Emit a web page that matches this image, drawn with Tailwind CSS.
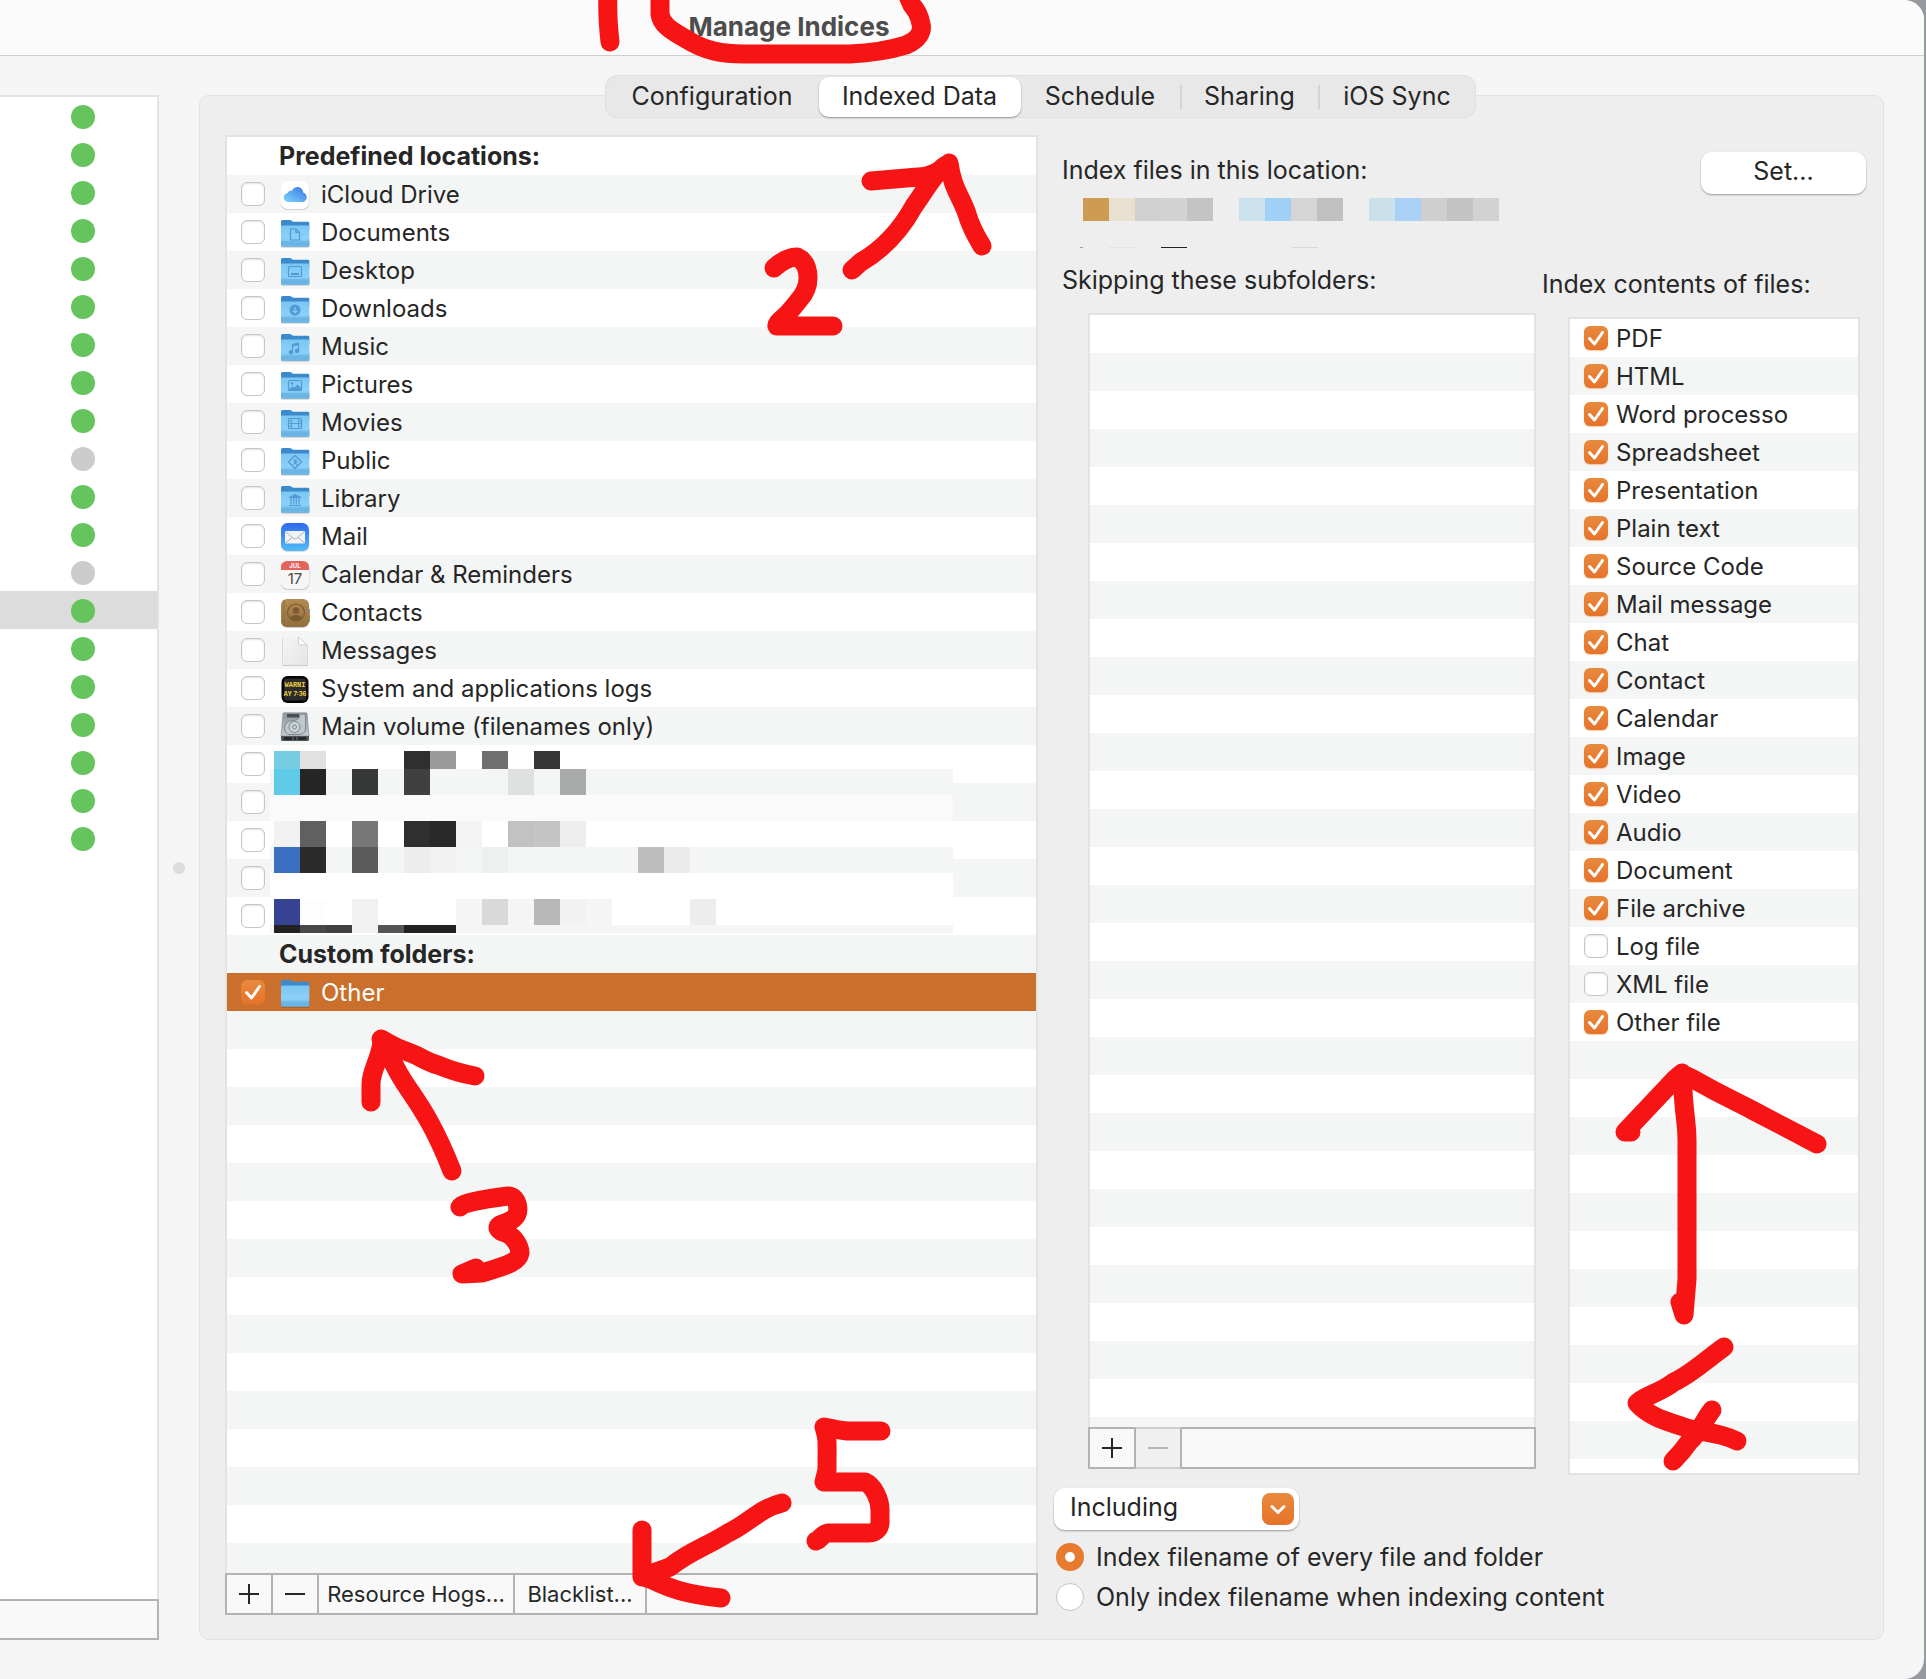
<!DOCTYPE html>
<html lang="en">

<head>
    <meta charset="UTF-8">
    <meta name="viewport" content="width=device-width, initial-scale=1.0">
    <title>Manage Indices</title>
    <script src="https://cdn.jsdelivr.net/npm/@tailwindcss/browser@4"></script>
</head>

<body class="relative overflow-x-hidden bg-[#96999e] font-[Inter,'Liberation_Sans',sans-serif] text-[25px] text-[#262626]">
    <div class="mr-[2px] flex min-h-screen flex-col rounded-r-[20px] bg-[#f5f5f5]">
        <header class="flex h-14 items-center justify-center rounded-tr-[20px] border-b border-[#cfcfcf] bg-[#fbfbfb] pb-[2px] pr-[346px]">
            <h1 class="text-[26px] font-bold text-[#4d4d4d]">Manage Indices</h1>
        </header>

        <div class="flex flex-1 pt-[39px] pr-10 pb-[39px]">
            <!-- index list, status column -->
            <aside class="flex w-[159px] shrink-0 flex-col">
                <ul id="statusList" class="flex-1 border-t-2 border-r-2 border-[#e3e3e3] bg-white"></ul>
                <div class="h-[41px] border-2 border-l-0 border-[#b3b3b3] bg-[#f8f8f8]"></div>
            </aside>
            <div class="flex w-10 shrink-0 items-center justify-center">
                <span class="size-3 rounded-full bg-[#dcdcdc]"></span>
            </div>

            <main class="flex min-w-0 flex-1 flex-col rounded-[10px] border border-[#e2e2e2] bg-[#eeeeee] pr-[17px] pb-6 pl-[25px]">
                <nav class="-mt-[21px] mr-[11px] flex h-[43px] items-center self-center rounded-[12px] border border-[#dfdfdf] bg-[#e8e8e8]">
                    <button class="w-[213px]">Configuration</button>
                    <button class="h-10 w-[202px] rounded-[10px] bg-white shadow-[0_1px_2px_rgba(0,0,0,0.35)]">Indexed Data</button>
                    <button class="w-[159px]">Schedule</button>
                    <span class="h-6 w-[2px] bg-[#d3d3d3]"></span>
                    <button class="w-[136px]">Sharing</button>
                    <span class="h-6 w-[2px] bg-[#d3d3d3]"></span>
                    <button class="w-[155px]">iOS Sync</button>
                </nav>

                <div class="mt-[17px] flex flex-1 gap-4">
                    <!-- locations -->
                    <section class="flex flex-[813] flex-col">
                        <div class="relative flex-1 border-x-2 border-t-2 border-[#e3e3e3] bg-[repeating-linear-gradient(#ffffff_0_38px,#f4f5f5_38px_76px)]">
                            <h2 class="h-[38px] pl-[52px] leading-[38px] font-bold">Predefined locations:</h2>
                            <ul id="locations" class="text-2xl"></ul>
                            <h2 class="h-[38px] pl-[52px] leading-[38px] font-bold">Custom folders:</h2>
                            <ul id="customFolders" class="text-2xl"></ul>
                            <svg id="mosaic" class="absolute top-[614px] left-[43px]" width="683" height="182" shape-rendering="crispEdges"></svg>
                        </div>
                        <div class="flex h-[42px] border-2 border-[#b3b3b3] bg-[#f9f9f9] text-[22px]">
                            <button aria-label="Add" class="flex w-[46px] items-center justify-center border-r-2 border-[#b3b3b3]">
                                <svg width="22" height="22" stroke="#262626" stroke-width="2"><path d="M1 11H21M11 1V21" /></svg>
                            </button>
                            <button aria-label="Remove" class="flex w-[46px] items-center justify-center border-r-2 border-[#b3b3b3]">
                                <svg width="22" height="22" stroke="#262626" stroke-width="2"><path d="M1 11H21" /></svg>
                            </button>
                            <button class="w-[196px] border-r-2 border-[#b3b3b3]">Resource Hogs...</button>
                            <button class="w-[132px] border-r-2 border-[#b3b3b3]">Blacklist...</button>
                        </div>
                    </section>

                    <section class="flex flex-[812] flex-col pt-[17px]">
                        <div class="flex items-start justify-between pl-2">
                            <h2 class="leading-9">Index files in this location:</h2>
                            <button class="h-[42px] w-[165px] rounded-[11px] bg-white pb-[2px] shadow-[0_1px_2px_rgba(0,0,0,0.35)]">Set...</button>
                        </div>
                        <div class="mt-1 ml-[29px] flex h-[23px]">
                            <span class="w-[26px] bg-[#ce9b52]"></span>
                            <span class="w-[26px] bg-[#e9e1cf]"></span>
                            <span class="w-[26px] bg-[#d0d0d0]"></span>
                            <span class="w-[26px] bg-[#d3d3d3]"></span>
                            <span class="w-[26px] bg-[#c4c4c4]"></span>
                            <span class="w-[26px]"></span>
                            <span class="w-[26px] bg-[#cbe1eb]"></span>
                            <span class="w-[26px] bg-[#9fd0f5]"></span>
                            <span class="w-[26px] bg-[#d5d5d5]"></span>
                            <span class="w-[26px] bg-[#c0c0c0]"></span>
                            <span class="w-[26px]"></span>
                            <span class="w-[26px] bg-[#cae1e9]"></span>
                            <span class="w-[26px] bg-[#abd0f6]"></span>
                            <span class="w-[26px] bg-[#cfcfcf]"></span>
                            <span class="w-[26px] bg-[#c3c3c3]"></span>
                            <span class="w-[26px] bg-[#d2d2d2]"></span>
                        </div>
                        <div class="mt-[26px] ml-[26px] flex h-px">
                            <span class="w-[3px] bg-[#a0a0a0]"></span>
                            <span class="ml-[26px] w-[26px] bg-[#e4e4e4]"></span>
                            <span class="ml-[26px] w-[26px] bg-[#222222]"></span>
                            <span class="ml-[105px] w-[26px] bg-[#d8d8d8]"></span>
                        </div>

                        <div class="flex flex-1">
                            <div class="mb-[6px] flex flex-1 flex-col pt-[14px]">
                                <h2 class="pl-2 leading-9">Skipping these subfolders:</h2>
                                <div class="mt-[15px] ml-[34px] flex-1 border-x-2 border-t-2 border-[#e3e3e3] bg-[repeating-linear-gradient(#ffffff_0_38px,#f4f5f5_38px_76px)]"></div>
                                <div class="ml-[34px] flex h-[42px]">
                                    <button aria-label="Add subfolder" class="flex w-12 items-center justify-center border-2 border-[#b3b3b3] bg-[#f9f9f9]">
                                        <svg width="22" height="22" stroke="#262626" stroke-width="2"><path d="M1 11H21M11 1V21" /></svg>
                                    </button>
                                    <button disabled aria-label="Remove subfolder" class="flex w-11 items-center justify-center border-y-2 border-[#cfcfcf] bg-[#f0f0f0]">
                                        <svg width="22" height="22" stroke="#b5b5b5" stroke-width="2"><path d="M1 11H21" /></svg>
                                    </button>
                                    <div class="flex-1 border-2 border-[#b3b3b3] bg-[#f9f9f9]"></div>
                                </div>
                            </div>
                            <div class="mr-[6px] flex w-[324px] flex-col pt-[18px]">
                                <h2 class="pl-[6px] leading-9">Index contents of files:</h2>
                                <ul id="fileTypes" class="mt-[15px] ml-8 flex-1 border-2 border-[#e3e3e3] bg-[repeating-linear-gradient(#ffffff_0_38px,#f4f5f5_38px_76px)] text-2xl"></ul>
                            </div>
                        </div>

                        <div class="relative mt-[13px] h-[42px] w-[245px]">
                            <select aria-label="Filename mode" class="size-full appearance-none rounded-[11px] bg-white pb-[2px] pl-4 shadow-[0_1px_2px_rgba(0,0,0,0.35)]">
                                <option>Including</option>
                            </select>
                            <svg class="pointer-events-none absolute top-[5px] right-[5px]" width="32" height="32" viewBox="0 0 32 32" fill="none">
                                <rect width="32" height="32" rx="8" fill="url(#orange)" />
                                <path d="M10 13.500L16 19.500L22 13.500" stroke="#fff" stroke-width="3" stroke-linecap="round" stroke-linejoin="round" />
                            </svg>
                        </div>
                        <div class="mt-[9px] flex flex-col gap-1 pl-[2px]">
                            <label class="flex h-9 items-center gap-3">
                                <input type="radio" name="mode" checked class="size-7 appearance-none rounded-full border border-[#c4c4c4] bg-white checked:border-[9px] checked:border-[#e67a2e]">
                                <span class="pt-[2px]">Index filename of every file and folder</span>
                            </label>
                            <label class="flex h-9 items-center gap-3">
                                <input type="radio" name="mode" class="size-7 appearance-none rounded-full border border-[#c4c4c4] bg-white checked:border-[9px] checked:border-[#e67a2e]">
                                <span class="pt-[2px]">Only index filename when indexing content</span>
                            </label>
                        </div>
                    </section>
                </div>
            </main>
        </div>
    </div>

    <!-- hand-drawn steps over the window -->
    <svg class="pointer-events-none absolute top-0 left-0" width="1926" height="1679" viewBox="0 0 1926 1679" fill="none" stroke="#f71414" stroke-width="19" stroke-linecap="round" stroke-linejoin="round">
        <path d="M608 -6Q607 15 610 42" />
        <path d="M660 -6V14C661 24 670 30 686 39C705 51 722 54 744 54H850C872 53 890 50 906 45C918 40 923 32 921 24C919 14 916 10 912 5L907 -6" />
        <path d="M774 268Q786 257 797 257Q808 262 808 278Q808 290 799 300Q788 314 783 318Q776 324 777 326H833" />
        <path d="M852 270L861 262C885 248 903 226 914 206C928 186 938 168 948 164C942 170 930 177 918 177L871 181M949 163C952 188 962 198 967 214Q971 228 982 246" />
        <path d="M381 1039C388 1042 391 1046 408 1052C420 1056 426 1062 438 1065C452 1071 464 1074 475 1076M382 1042C380 1060 371 1070 371 1084V1102M384 1042C394 1066 399 1075 410 1091C423 1110 436 1130 452 1171" />
        <path d="M460 1207Q462 1202 508 1196C520 1197 518 1212 517 1214C513 1224 498 1222 498 1228C500 1234 506 1230 514 1239C518 1244 520 1248 520 1253C518 1264 500 1267 482 1273L462 1274L476 1268" />
        <path d="M1625 1132H1631M1625 1132L1674 1080Q1678 1076 1682 1073C1684 1120 1687 1120 1687 1140V1279L1684 1315L1680 1302M1682 1074L1693 1079C1730 1100 1740 1103 1752 1110L1817 1144" />
        <path d="M1724 1347C1706 1360 1690 1375 1674 1382C1660 1393 1646 1395 1637 1403C1650 1418 1670 1422 1690 1429C1715 1434 1722 1434 1737 1441M1712 1410C1704 1420 1700 1432 1689 1442C1682 1452 1678 1456 1673 1461" />
        <path d="M881 1431H847Q838 1430 824 1427C828 1440 827 1440 827 1470L824 1482H865C874 1486 880 1500 880 1510V1522C880 1530 874 1533 868 1533H828C822 1534 820 1540 816 1541" />
        <path d="M782 1503C760 1508 748 1524 728 1533C704 1548 692 1550 670 1567L642 1577V1530M642 1577C660 1580 664 1592 721 1598" />
    </svg>

    <!-- shared icon parts -->
    <svg width="0" height="0" class="absolute">
        <defs>
            <linearGradient id="orange" x2="0" y2="1"><stop stop-color="#e88a3d" /><stop offset="1" stop-color="#e5732a" /></linearGradient>
            <linearGradient id="folderFront" x2="0" y2="1"><stop stop-color="#7cc6f3" /><stop offset=".6" stop-color="#8bd0f8" /><stop offset="1" stop-color="#67b4e6" /></linearGradient>
            <linearGradient id="cloud" x1="0" y1="1" x2="1" y2="0"><stop stop-color="#7fd6fb" /><stop offset="1" stop-color="#3a74ea" /></linearGradient>
            <linearGradient id="mail" x2="0" y2="1"><stop stop-color="#2f68ee" /><stop offset="1" stop-color="#51bdf9" /></linearGradient>
            <linearGradient id="book" x2="0" y2="1"><stop stop-color="#b28a51" /><stop offset="1" stop-color="#946f3e" /></linearGradient>
            <linearGradient id="paper" x2="1" y2="1"><stop stop-color="#f4f4f4" /><stop offset="1" stop-color="#e6e6e6" /></linearGradient>
            <linearGradient id="disk" x2="0" y2="1"><stop stop-color="#8f979d" /><stop offset="1" stop-color="#c5cdd3" /></linearGradient>
            <symbol id="folder" viewBox="0 0 30 30">
                <rect x="1" y="20" width="28.500" height="9.500" rx="1.500" fill="#00000040" />
                <path d="M1 3.500Q1 2 2.500 2H9.500Q11 2 12 3L13 3.700H28Q29.300 3.700 29.300 5V12H1Z" fill="#3b8acb" />
                <path d="M1 8.500Q1 7.500 2 7.500H28.500Q29.300 7.500 29.300 8.500V27.500Q29.300 28.700 28 28.700H2.300Q1 28.700 1 27.500Z" fill="url(#folderFront)" />
                <path d="M1 24H29.300M1 26H29.300" stroke="#5aa7dc" stroke-width=".8" />
            </symbol>
        </defs>
    </svg>

    <script>
        const folder = (glyph) => `<use href="#folder" width="30" height="30" /><g fill="none" stroke="#4f9bd3" stroke-width="1.200" stroke-linejoin="round">${glyph}</g>`;

        const icons = {
            icloud: '<rect x="1" y="1.800" width="28.300" height="28" rx="6.500" fill="#00000030" /><rect x="1" y="1" width="28" height="28" rx="6.500" fill="#fff" /><path d="M9 22C5.500 22 3.700 19.800 3.700 17.500C3.700 15 5.500 13.200 7.800 13C8.300 11.200 10 10.300 11.800 10.800C13 8.300 15 7 17.300 7C20.800 7 23 9.500 23.200 12.400C25.300 13 26.700 15 26.700 17.200C26.700 20 24.600 22 22 22Z" fill="url(#cloud)" />',
            documents: folder('<path d="M10.500 11H16L19.500 14.500V22H10.500ZM16 11V14.500H19.500" />'),
            desktop: folder('<rect x="8.500" y="10.500" width="13" height="10" rx="1" /><path d="M11 18H19" stroke-width="2" />'),
            downloads: folder('<circle cx="15" cy="16" r="5.500" fill="#4f9bd3" stroke="none" /><path d="M15 13V18.500M12.700 16.500L15 18.800L17.300 16.500" stroke="#86cbf5" />'),
            music: folder('<path d="M12.500 20V12.500L18.500 11V18.500" /><path d="M12.500 13.500L18.500 12" stroke-width="2" /><circle cx="11" cy="20.300" r="1.700" fill="#4f9bd3" /><circle cx="17" cy="19" r="1.700" fill="#4f9bd3" />'),
            pictures: folder('<rect x="8.500" y="10.500" width="13" height="10" rx="1" /><path d="M9 19.500L12.500 16L14.500 17.500L17.500 14.500L21.500 18.500V20.500H9Z" fill="#4f9bd3" stroke="none" /><circle cx="12" cy="13.500" r="1.200" fill="#4f9bd3" stroke="none" />'),
            movies: folder('<rect x="8.500" y="10.500" width="13" height="10" rx="1" /><path d="M11.500 10.500V20.500M18.500 10.500V20.500M11.500 15.500H18.500M8.500 13H11.500M8.500 15.500H11.500M8.500 18H11.500M18.500 13H21.500M18.500 15.500H21.500M18.500 18H21.500" stroke-width=".9" />'),
            public: folder('<path d="M15 9.500L21.500 16L15 22.500L8.500 16Z" /><path d="M15.500 13V16L17 19.500M15.500 15.500L13.500 19M13 15L15.500 14.500L17.500 16" />'),
            library: folder('<path d="M9.500 13.500L15 10.500L20.500 13.500ZM9 21.500H21" fill="#4f9bd3" /><path d="M11 14V20.500M13.700 14V20.500M16.300 14V20.500M19 14V20.500" />'),
            other: folder(''),
            mail: '<rect x="1" y="1.800" width="28.300" height="28" rx="6.500" fill="#00000030" /><rect x="1" y="1" width="28" height="28" rx="6.500" fill="url(#mail)" /><rect x="5" y="9" width="20" height="12.500" rx="1" fill="#f1f3f5" /><path d="M5.500 9.500L13.500 16.500Q15 17.800 16.500 16.500L24.500 9.500M5.500 21L12 15.500M24.500 21L18 15.500" fill="none" stroke="#a3a9b0" stroke-width=".9" />',
            calendar: '<rect x="1" y="1.800" width="28.300" height="28" rx="6.500" fill="#00000038" /><rect x="1" y="1" width="28" height="28" rx="6.500" fill="#f7f6f5" /><path d="M1 10V7.500Q1 1 7.500 1H22.500Q29 1 29 7.500V10Z" fill="#e4635a" /><text x="15" y="8" text-anchor="middle" font-size="6" font-weight="700" fill="#fff">JUL</text><text x="15" y="24" text-anchor="middle" font-size="15" fill="#4a4a4a">17</text>',
            contacts: '<path d="M27 11H30V15H27Z" fill="#5b9ec9" /><path d="M27 15H30V19H27Z" fill="#dc7a39" /><path d="M27 19H30V24H27Z" fill="#6aa84a" /><rect x="1" y="1.500" width="28" height="28.300" rx="6" fill="#00000040" /><rect x="1" y="1" width="28" height="28" rx="6" fill="url(#book)" /><path d="M4 2V28" stroke="#8e6a3a" stroke-width=".8" /><circle cx="16" cy="14.500" r="8.500" fill="none" stroke="#7c5b31" stroke-width="1.200" /><circle cx="16" cy="12.500" r="3.200" fill="#7c5b31" /><path d="M10 20Q11.500 17 16 17T22 20Q19.500 23 16 23T10 20Z" fill="#7c5b31" />',
            messages: '<path d="M2.500 1.500H19L27.500 9.500V29.800H2.500Z" fill="#00000038" /><path d="M3 1H18.500L27 9V29H3Z" fill="url(#paper)" /><path d="M18.500 1V7.500Q18.500 9 20 9H27Z" fill="#fff" stroke="#c4c4c4" stroke-width=".8" />',
            logs: '<rect x="1.500" y="2" width="27" height="27" rx="6" fill="#050505" /><rect x="4" y="4.500" width="22" height="22" rx="3" fill="#2b2b2b" /><text x="15" y="13" text-anchor="middle" font-size="7" font-weight="700" font-family="Liberation Mono" fill="#f2cf3c">WARNI</text><text x="15" y="22" text-anchor="middle" font-size="6" font-weight="700" fill="#f2cf3c">AY 7:36</text>',
            volume: '<path d="M3 1.500Q3.200 .8 4 .8H26Q26.800 .8 27 1.500L29 24H1Z" fill="url(#disk)" stroke="#7d858b" stroke-width=".6" /><path d="M1 24H29V27.500Q29 29 27.500 29H2.500Q1 29 1 27.500Z" fill="#4d5358" /><path d="M4 26.500H12M14 26.500H16M18 26.500H26" stroke="#202326" stroke-width="2.500" /><rect x="7" y="2" width="12" height="3.500" fill="#4a4f54" /><path d="M25.500 3V17Q25 22.500 18 22.500H9Q4.500 21 4.500 16Q5 9 13 8.500Q20 8 20 3" fill="#bfc8ce" stroke="#7f888e" /><circle cx="14.500" cy="15" r="5.500" fill="#ccd4d9" stroke="#7f888e" /><circle cx="14.500" cy="15" r="2" fill="none" stroke="#7f888e" />'
        };

        const tick = (checked) => `
            <span class="relative size-6 shrink-0">
                <input type="checkbox" ${checked ? 'checked' : ''} class="peer block size-6 appearance-none rounded-[6px] border border-[#c6c6c6] bg-white shadow-[inset_0_1px_2px_rgba(0,0,0,0.12)] checked:border-0 checked:bg-linear-to-b checked:from-[#e88a3d] checked:to-[#e5732a] checked:shadow-[0_1px_1px_rgba(230,120,40,0.4)]">
                <svg class="pointer-events-none absolute inset-0 hidden peer-checked:block" width="24" height="24" fill="none" stroke="#fff" stroke-width="3" stroke-linecap="round" stroke-linejoin="round"><path d="M5.500 12.500L10.500 18L18.500 6.500" /></svg>
            </span>`;

        const locations = [
            ['icloud', 'iCloud Drive'], ['documents', 'Documents'], ['desktop', 'Desktop'], ['downloads', 'Downloads'],
            ['music', 'Music'], ['pictures', 'Pictures'], ['movies', 'Movies'], ['public', 'Public'], ['library', 'Library'],
            ['mail', 'Mail'], ['calendar', 'Calendar & Reminders'], ['contacts', 'Contacts'], ['messages', 'Messages'],
            ['logs', 'System and applications logs'], ['volume', 'Main volume (filenames only)'],
            null, null, null, null, null
        ];

        const locationRow = (icon, name, checked) => `
            <label class="flex h-[38px] items-center pl-[14px]">
                ${tick(checked)}
                <svg class="ml-[15px] mr-[11px] shrink-0" width="30" height="30" viewBox="0 -1 30 30" overflow="visible">${icons[icon] || ''}</svg>
                <span class="pt-[2px]">${name}</span>
            </label>`;

        document.getElementById('locations').innerHTML = locations
            .map((item) => `<li>${item ? locationRow(item[0], item[1].replace('&', '&amp;'), false) : locationRow('', '', false)}</li>`).join('');
        document.getElementById('customFolders').innerHTML = `<li class="bg-[#cb702c] text-white">${locationRow('other', 'Other', true)}</li>`;

        const fileTypes = ['PDF', 'HTML', 'Word processor', 'Spreadsheet', 'Presentation', 'Plain text', 'Source Code', 'Mail message', 'Chat',
            'Contact', 'Calendar', 'Image', 'Video', 'Audio', 'Document', 'File archive', 'Log file', 'XML file', 'Other file'];
        const unchecked = ['Log file', 'XML file'];
        document.getElementById('fileTypes').innerHTML = fileTypes.map((name) => `
            <li><label class="flex h-[38px] items-center gap-2 pl-[14px]">
                ${tick(!unchecked.includes(name))}
                <span class="w-[172px] overflow-hidden pt-[2px] whitespace-nowrap">${name}</span>
            </label></li>`).join('');

        // one letter per index: g = up to date, x = idle, s = up to date and selected
        document.getElementById('statusList').innerHTML = [...'gggggggggxggxsgggggg'].map((state) => `
            <li class="flex h-[38px] items-center pt-[2px] pl-[71px] ${state === 's' ? 'bg-[#dcdcdc]' : ''}">
                <span class="size-6 rounded-full ${state === 'x' ? 'bg-[#cbcbcd]' : 'bg-[#65c45b]'}"></span>
            </li>`).join('');

        // hidden names: [top, height, background, { column: colour }]
        const mosaic = [
            [0, 18, '#fff', { 0: '#76cde3', 1: '#e1e1e1', 5: '#2f2f2f', 6: '#9b9b9b', 8: '#707070', 10: '#363636' }],
            [18, 26, '#f4f5f5', { 0: '#5fcbe8', 1: '#262626', 3: '#363837', 5: '#404040', 9: '#dfe1e0', 11: '#a9abaa' }],
            [44, 26, '#fafafa', {}],
            [70, 26, '#fff', { 0: '#f2f2f2', 1: '#606060', 3: '#787878', 5: '#2f2f2f', 6: '#282828', 7: '#f3f3f3', 9: '#c2c2c2', 10: '#c5c5c5', 11: '#eee' }],
            [96, 26, '#f4f5f5', { 0: '#3b6fc2', 1: '#2b2b2b', 3: '#5c5c5c', 5: '#ecedec', 6: '#f1f2f1', 8: '#eeefef', 14: '#bebebe', 15: '#eaebea' }],
            [122, 26, '#fff', {}],
            [148, 26, '#fff', { 0: '#364292', 1: '#fdfdfd', 3: '#f1f1f1', 7: '#f5f5f5', 8: '#d9d9d9', 9: '#f5f5f5', 10: '#b8b8b8', 11: '#f2f2f2', 12: '#f5f5f5', 16: '#ededed' }],
            [174, 8, '#f4f5f5', { 0: '#222', 1: '#484848', 2: '#404040', 3: '#f1f2f2', 4: '#555', 5: '#222', 6: '#222' }]
        ];
        document.getElementById('mosaic').innerHTML = mosaic.map(([y, h, bg, cells]) =>
            `<rect y="${y}" width="683" height="${h}" fill="${bg}" />` +
            Object.entries(cells).map(([col, fill]) => `<rect x="${4 + col * 26}" y="${y}" width="26" height="${h}" fill="${fill}" />`).join('')).join('');
    </script>
</body>
</html>
